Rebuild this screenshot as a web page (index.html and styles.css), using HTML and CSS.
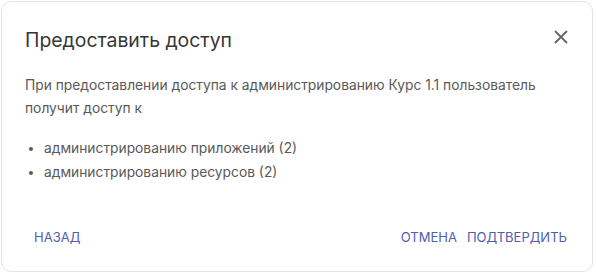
FILE: index.html
```html
<!DOCTYPE html>
<html lang="ru">
<head>
<meta charset="utf-8">
<link rel="stylesheet" href="styles.css">
</head>
<body>
<div class="dialog">
  <div class="header">
    <h2 class="title">Предоставить доступ</h2>
    <button class="close" aria-label="Закрыть">
      <svg width="14" height="14" viewBox="0 0 14 14"><path d="M1 1L13 13M13 1L1 13" stroke="#666" stroke-width="1.8" fill="none"/></svg>
    </button>
  </div>
  <div class="content">
    <p class="text">При предоставлении доступа к администрированию Курс 1.1 пользователь получит доступ к</p>
    <ul class="list">
      <li>администрированию приложений (2)</li>
      <li>администрированию ресурсов (2)</li>
    </ul>
  </div>
  <div class="actions">
    <button class="btn">НАЗАД</button>
    <div class="spacer"></div>
    <button class="btn">ОТМЕНА</button>
    <button class="btn">ПОДТВЕРДИТЬ</button>
  </div>
</div>
</body>
</html>
```
FILE: styles.css
```css
html, body { margin: 0; padding: 0; background: #fff; }
body { padding: 1px; font-family: Inter, "Noto Sans", sans-serif; }
.dialog {
  width: 592px; height: 271px; box-sizing: border-box;
  border: 1px solid #e3e3e3; border-radius: 10px;
  display: flex; flex-direction: column;
  background: #fff;
}
.header { display: flex; align-items: center; justify-content: space-between; padding: 26px 24px 0 23px; height: 30px; margin-top: -3px; }
.title { margin: 0; font-size: 19.4px; font-weight: 400; color: #363636; }
.close { border: 0; background: none; padding: 0; width: 14px; height: 14px; display: flex; margin-top: -7px; }
.content { padding: 19px 23px 0 23px; color: #595959; font-size: 13.8px; }
.text { margin: 0; line-height: 23px; }
.list { margin: 16px 0 0; padding-left: 19px; line-height: 24px; }
.actions { margin-top: auto; display: flex; align-items: center; padding: 0 20px 20px 27px; }
.spacer { flex: 1; }
.btn { border: 0; background: none; font-family: inherit; font-size: 13px; color: #4f5eb0; padding: 6px 5px; }
```
